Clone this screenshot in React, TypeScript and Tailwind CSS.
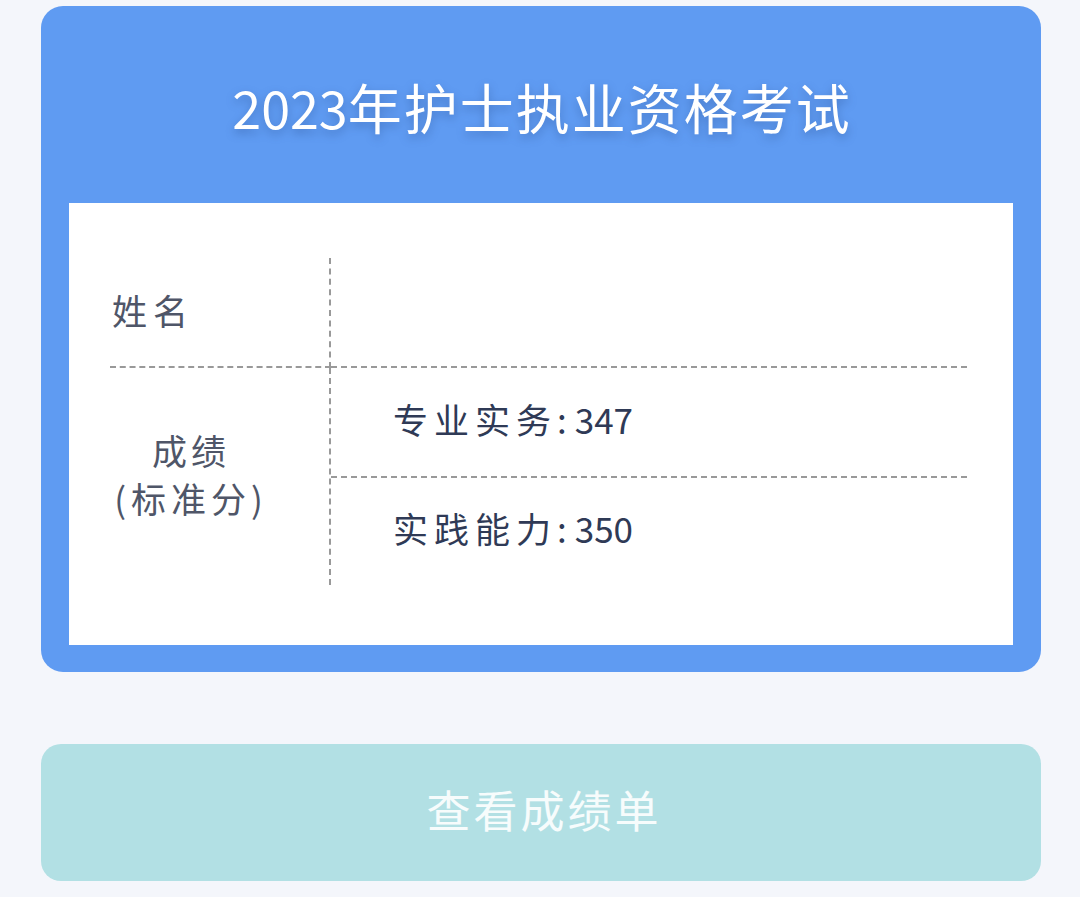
const cjk = '"Noto Sans CJK SC", "Noto Sans", sans-serif';

const Score = ({ label, value }: { label: string; value: string }) => (
  <span className="flex items-baseline pb-[8px] text-[35px] leading-none text-[#2f3a56]">
    <span className="tracking-[6px]">{label}</span>
    <span className="mr-[8px]">:</span>
    <span>{value}</span>
  </span>
);

export default function App() {
  return (
    <div className="min-h-[897px] w-[1080px] bg-[#f4f6fb] pr-[39px] pl-[41px] pt-[6px]" style={{ fontFamily: cjk }}>
      <div className="rounded-[22px] bg-[#5f9bf2] pb-[27px]">
        <div className="flex h-[197px] items-center justify-center pt-[4px] text-white [filter:drop-shadow(0_4px_5px_rgba(30,60,120,0.35))]">
          <span className="text-[52px] leading-none">2023</span>
          <span className="mr-[-2px] text-[54px] leading-none tracking-[2px]">年护士执业资格考试</span>
        </div>
        <div className="mx-[28px] h-[442px] bg-white pt-[55px]">
          <div className="ml-[41px] grid w-[857px] grid-cols-[221px_1fr]">
            <div className="flex h-[110px] items-center border-r-2 border-b-2 border-dashed border-[#999999] pb-[6px] pl-[2px]">
              <span className="text-[35px] leading-none tracking-[6px] text-[#4f5668]">姓名</span>
            </div>
            <div className="h-[110px] border-b-2 border-dashed border-[#999999]" />
            <div className="flex h-[217px] items-center border-r-2 border-dashed border-[#999999] pb-[6px]">
              <div className="w-[162px] text-center text-[35px] leading-[48px] text-[#4f5668]">
                <div className="tracking-[4px]">成绩</div>
                <div className="tracking-[5px]">(标准分)</div>
              </div>
            </div>
            <div className="flex h-[217px] flex-col">
              <div className="flex h-[110px] items-center border-b-2 border-dashed border-[#999999] pl-[62px]">
                <Score label="专业实务" value="347" />
              </div>
              <div className="flex flex-1 items-center pl-[62px]">
                <Score label="实践能力" value="350" />
              </div>
            </div>
          </div>
        </div>
      </div>
      <button
        type="button"
        className="mt-[72px] flex h-[137px] w-full items-center justify-center rounded-[20px] bg-[#b2e0e4] pb-[8px] pl-[6px] text-[44px] tracking-[3px] text-white/90"
      >
        查看成绩单
      </button>
    </div>
  );
}
